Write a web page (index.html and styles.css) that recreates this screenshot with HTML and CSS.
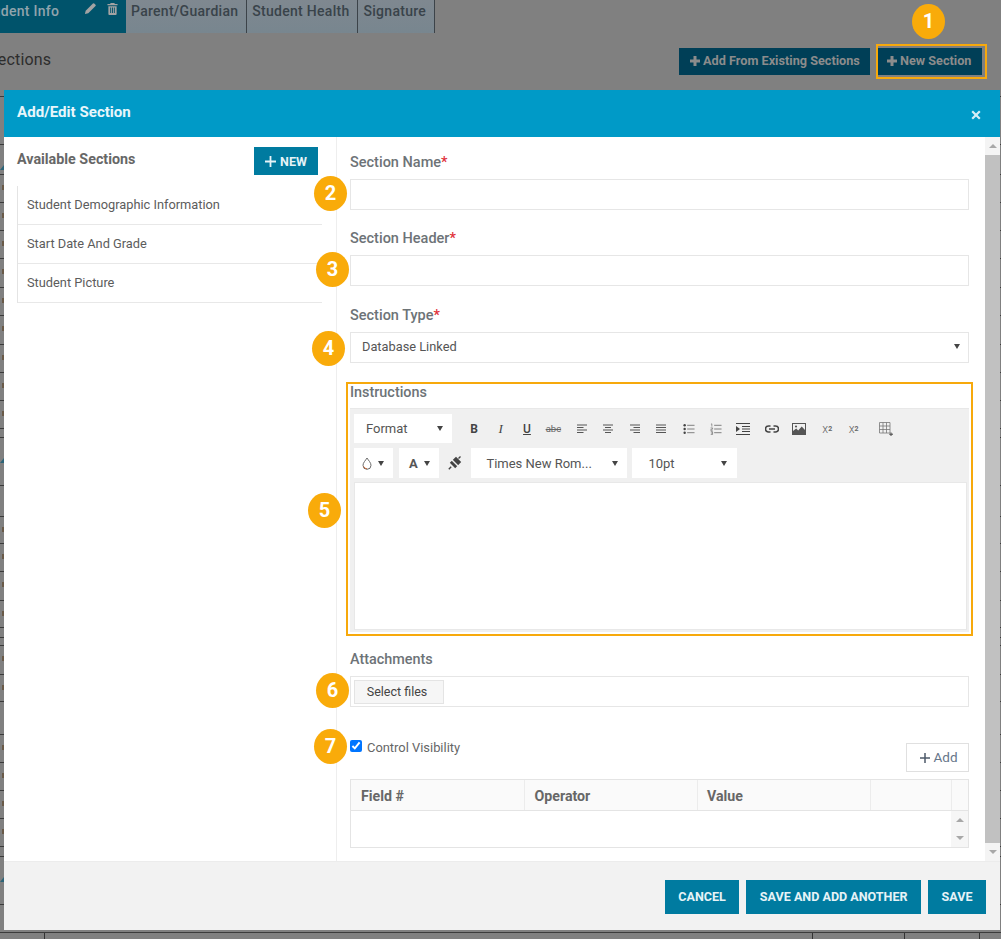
FILE: index.html
```html
<!DOCTYPE html>
<html lang="en">
<head>
<meta charset="utf-8">
<title>Add/Edit Section</title>
<link rel="stylesheet" href="styles.css">
</head>
<body>
<div class="page">
  <nav class="tabs">
    <div class="tab tab-active">
      <span class="tab-active-name">Student Info</span>
      <svg class="tab-icon pencil" viewBox="0 0 14 14"><path d="M1 13l.8-3.6L9.6 1.6a1 1 0 0 1 1.4 0l1.4 1.4a1 1 0 0 1 0 1.4L4.6 12.2z" fill="#a3a3a3"/></svg>
      <svg class="tab-icon trash" viewBox="0 0 12 14"><path d="M4 1h4l.6 1.2H11.500V3.500H.5V2.200H3.400zM1.500 4.500h9V13a1 1 0 0 1-1 1h-7a1 1 0 0 1-1-1zM3.500 6v6h1V6zM5.500 6v6h1V6zM7.500 6v6h1V6z" fill="#a3a3a3" fill-rule="evenodd"/></svg>
    </div>
    <div class="tab">Parent/Guardian</div>
    <div class="tab">Student Health</div>
    <div class="tab">Signature</div>
  </nav>
  <header class="back-head">
    <h1 class="back-title">Sections</h1>
    <div class="back-actions">
      <button class="back-btn back-btn-add"><svg class="back-plus" viewBox="0 0 10 10"><path d="M5 0v10M0 5h10" stroke="#8c8c8c" stroke-width="3"/></svg>Add From Existing Sections</button>
      <div class="new-frame"><button class="back-btn back-btn-new"><svg class="back-plus" viewBox="0 0 10 10"><path d="M5 0v10M0 5h10" stroke="#8c8c8c" stroke-width="3"/></svg>New Section</button></div>
    </div>
  </header>
  <div class="back-table">
    <div class="back-row" style="height:48px"></div>
    <div class="back-row" style="height:30px"><i class="tri"></i></div>
    <div class="back-row" style="height:28px"><i class="mark"></i></div>
    <div class="back-row" style="height:28px"><i class="mark"></i></div>
    <div class="back-row" style="height:28px"><i class="mark"></i></div>
    <div class="back-row" style="height:29px"><i class="mark"></i></div>
    <div class="back-row" style="height:28px"><i class="mark"></i></div>
    <div class="back-row" style="height:29px"><i class="mark"></i></div>
    <div class="back-row" style="height:28px"><i class="mark"></i></div>
    <div class="back-row" style="height:28px"><i class="mark"></i></div>
    <div class="back-row" style="height:28px"><i class="mark"></i></div>
    <div class="back-row" style="height:9px"></div>
    <div class="back-row" style="height:48px"><i class="tri"></i></div>
    <div class="back-row" style="height:31px"></div>
    <div class="back-row" style="height:27px"><i class="mark"></i></div>
    <div class="back-row" style="height:28px"><i class="mark"></i></div>
    <div class="back-row" style="height:29px"><i class="mark"></i></div>
    <div class="back-row" style="height:27px"><i class="mark"></i></div>
    <div class="back-row" style="height:10px"></div>
    <div class="back-row" style="height:8px"></div>
    <div class="back-row" style="height:29px"><i class="mark"></i></div>
    <div class="back-row" style="height:27px"><i class="mark"></i></div>
    <div class="back-row" style="height:33px"></div>
    <div class="back-row" style="height:28px"><i class="mark"></i></div>
    <div class="back-row" style="height:28px"><i class="mark"></i></div>
    <div class="back-row" style="height:28px"><i class="mark"></i></div>
    <div class="back-row" style="height:28px"><i class="mark"></i></div>
    <div class="back-row" style="height:10px"></div>
    <div class="back-row" style="height:48px"><i class="tri"></i></div>
    <div class="back-row" style="height:28px"></div>
    <div class="back-row back-cells">
      <span class="back-cell cell-a"></span><span class="back-cell cell-b"></span><span class="back-cell cell-c"></span><span class="back-cell cell-d"></span>
    </div>
  </div>

  <section class="modal">
    <div class="modal-head">
      <h2 class="modal-title">Add/Edit Section</h2>
      <svg class="modal-close" viewBox="0 0 10 10"><path d="M1.200 1.200l7.600 7.600M8.800 1.200L1.200 8.800" stroke="#d6eef6" stroke-width="2.200"/></svg>
    </div>
    <div class="modal-body">
      <aside class="side">
        <div class="side-head">
          <h3 class="side-title">Available Sections</h3>
          <button class="new-btn"><svg class="new-plus" viewBox="0 0 11 11"><path d="M5.500 0v11M0 5.500h11" stroke="#e6f3f7" stroke-width="1.800"/></svg>NEW</button>
        </div>
        <ul class="side-list">
          <li class="side-item">Student Demographic Information</li>
          <li class="side-item">Start Date And Grade</li>
          <li class="side-item">Student Picture</li>
        </ul>
      </aside>
      <div class="form">
        <label class="label">Section Name<span class="req">*</span></label>
        <div class="field"></div>
        <label class="label label-next">Section Header<span class="req">*</span></label>
        <div class="field"></div>
        <label class="label label-next3">Section Type<span class="req">*</span></label>
        <div class="field select-field"><span>Database Linked</span><i class="caret"></i></div>

        <div class="instructions">
          <div class="instr-label">Instructions</div>
          <div class="editor">
            <div class="tool-row">
              <div class="drop drop-format"><span>Format</span><i class="caret"></i></div>
              <div class="tools">
                <span class="tool tool-b">B</span>
                <span class="tool tool-i">I</span>
                <span class="tool tool-u">U</span>
                <span class="tool tool-s">abc</span>
                <span class="tool gap2"><svg class="ic" viewBox="0 0 12 12"><path d="M1 2h10M1 4.500h6.500M1 7h10M1 9.500h6.500" stroke="#555" stroke-width="1.200"/></svg></span>
                <span class="tool"><svg class="ic" viewBox="0 0 12 12"><path d="M1 2h10M3 4.500h6M1 7h10M3 9.500h6" stroke="#555" stroke-width="1.200"/></svg></span>
                <span class="tool"><svg class="ic" viewBox="0 0 12 12"><path d="M1 2h10M4.500 4.500H11M1 7h10M4.500 9.500H11" stroke="#555" stroke-width="1.200"/></svg></span>
                <span class="tool"><svg class="ic" viewBox="0 0 12 12"><path d="M1 2h10M1 4.500h10M1 7h10M1 9.500h10" stroke="#555" stroke-width="1.200"/></svg></span>
                <span class="tool gap2"><svg class="ic" viewBox="0 0 13 12"><path d="M4.500 2H12.500M4.500 6H12.500M4.500 10H12.500" stroke="#777" stroke-width="1"/><circle cx="1.800" cy="2" r="1.300" fill="#444"/><circle cx="1.800" cy="6" r="1.300" fill="#444"/><circle cx="1.800" cy="10" r="1.300" fill="#444"/></svg></span>
                <span class="tool"><svg class="ic" viewBox="0 0 13 12"><path d="M4.500 2H12.500M4.500 6H12.500M4.500 10H12.500" stroke="#777" stroke-width="1"/><path d="M1 .8l1-.4v3M.6 4.800h2.200v1.400H1V8h2M.8 9h2v3H.8M1 10.500h1.800" stroke="#555" stroke-width=".6" fill="none"/></svg></span>
                <span class="tool gap1"><svg class="ic ic-lg" viewBox="0 0 14 13"><path d="M0 1h14M6 4h8M6 6.500h8M6 9h8M0 12h14" stroke="#444" stroke-width="1.100"/><path d="M0 3.500l4 3-4 3z" fill="#444"/></svg></span>
                <span class="tool gap3"><svg class="ic ic-lg" viewBox="0 0 14 8"><path d="M5.500 1H3.500a3 3 0 0 0 0 6h2M8.500 1h2a3 3 0 0 1 0 6h-2M4 4h6" stroke="#444" stroke-width="1.500" fill="none"/></svg></span>
                <span class="tool"><svg class="ic ic-lg" viewBox="0 0 14 12"><path fill="#555" fill-rule="evenodd" d="M0 0h14v12H0zM1 1v7l3.200-2.600 2 2 3.500-3.800L13 7V1z"/><circle cx="4" cy="3.500" r="1.100" fill="#555"/></svg></span>
                <span class="tool gap2 tool-script">x<sub class="script-mark">2</sub></span>
                <span class="tool tool-script">x<sup class="script-mark">2</sup></span>
                <span class="tool gap6"><svg class="ic ic-lg" viewBox="0 0 14 14"><path d="M.5.500h10.500v10.500H.500zM.5 4h10.500M.5 7.500h10.500M4 .5v10.500M7.500 .5v10.500" stroke="#777" stroke-width=".8" fill="none"/><path d="M12 10.500v3.500M10.200 12.200h3.800" stroke="#444" stroke-width="1"/></svg></span>
              </div>
            </div>
            <div class="tool-row tool-row2">
              <div class="drop drop-color"><svg class="drop-ic" viewBox="0 0 10 13"><path d="M5 1C3.500 3.500 1 5.700 1 8.300a4 4 0 0 0 8 0C9 5.700 6.500 3.500 5 1z" fill="none" stroke="#6a6a6a" stroke-width="1"/><path d="M1.700 9.500a3.600 3.600 0 0 0 3.300 2.300" fill="none" stroke="#c96a3a" stroke-width="1"/></svg><i class="caret"></i></div>
              <div class="drop drop-a"><b>A</b><i class="caret"></i></div>
              <span class="tool tool-clear"><svg class="ic ic-lg" viewBox="0 0 14 14"><path d="M8 .8l5.200 5.200-6 6.200L1.800 6.800z" fill="#444"/><path d="M1.500 1.500l11 11" stroke="#f0f0f0" stroke-width="1.400"/><path d="M3.200 10.800L.8 13.200M10.500 2.500l2-2" stroke="#444" stroke-width="1.400"/></svg></span>
              <div class="drop drop-font"><span>Times New Rom...</span><i class="caret"></i></div>
              <div class="drop drop-size"><span>10pt</span><i class="caret"></i></div>
            </div>
            <div class="edit-area"></div>
          </div>
        </div>

        <label class="label label-attach">Attachments</label>
        <div class="field upload"><button class="select-files">Select files</button></div>

        <div class="visibility">
          <label class="check-label"><input class="check" type="checkbox" checked><span class="check-text">Control Visibility</span></label>
          <button class="add-btn"><svg class="add-plus" viewBox="0 0 10 10"><path d="M5 0v10M0 5h10" stroke="#4d5a6a" stroke-width="1.500"/></svg>Add</button>
        </div>

        <div class="grid">
          <div class="grid-head">
            <span class="gh gh-w">Field #</span>
            <span class="gh gh-w">Operator</span>
            <span class="gh gh-w2">Value</span>
            <span class="gh gh-e"></span>
            <span class="gh-s"></span>
          </div>
          <div class="grid-body">
            <div class="grid-scroll"><i class="arr-up"></i><i class="arr-down"></i></div>
          </div>
        </div>
      </div>
      <div class="scroll">
        <i class="arr-up"></i>
        <div class="scroll-thumb"></div>
        <i class="arr-down"></i>
      </div>
    </div>
    <div class="modal-foot">
      <button class="foot-btn">CANCEL</button>
      <button class="foot-btn">SAVE AND ADD ANOTHER</button>
      <button class="foot-btn">SAVE</button>
    </div>
  </section>

  <span class="badge b1">1</span>
  <span class="badge b2">2</span>
  <span class="badge b3">3</span>
  <span class="badge b4">4</span>
  <span class="badge b5">5</span>
  <span class="badge b6">6</span>
  <span class="badge b7">7</span>
</div>
</body>
</html>
```

FILE: styles.css
```css
* { box-sizing: border-box; }
html, body { margin: 0; padding: 0; }
body { font-family: Roboto, "Liberation Sans", sans-serif; background: #808080; }
button { font-family: inherit; border: 0; padding: 0; cursor: pointer; }
h1, h2, h3, ul { margin: 0; padding: 0; }
.page { position: relative; width: 1001px; height: 939px; overflow: hidden; background: #808080; }

/* backdrop */
.tabs { display: flex; height: 33px; }
.tab { padding: 2px 8px 0 5px; background: linear-gradient(#7f8890, #78868f); border-right: 1px solid #3c4349; font-size: 14px; font-weight: 500; letter-spacing: .28px; line-height: 18px; color: #39434a; }
.tab-active { position: relative; width: 126px; padding: 2px 0 0; background: #00536b; border-right: 0; color: #90a4ad; overflow: hidden; }
.tab-active-name { display: block; margin-left: -21px; white-space: nowrap; }
.tab-icon { position: absolute; top: 2px; }
.pencil { left: 84px; width: 13px; height: 13px; }
.trash { left: 107px; width: 11px; height: 13px; }
.back-head { display: flex; justify-content: space-between; height: 63px; }
.back-title { margin: 17px 0 0 -12px; font-size: 16px; font-weight: 400; letter-spacing: .2px; line-height: 20px; color: #2d2d2d; }
.back-actions { display: flex; gap: 6px; padding: 11px 14px 0 0; }
.back-btn { display: flex; align-items: center; height: 27px; padding: 0 0 2px; background: #003f57; color: #8c8c8c; font-size: 12.700px; font-weight: 700; }
.back-btn-add { width: 191px; margin-top: 4px; padding-left: 11px; }
.new-frame { display: flex; width: 111px; height: 35px; padding: 2px 3px 2px 0; border: 2px solid #f7a90c; }
.back-btn-new { width: 104px; padding-left: 9px; }
.back-plus { flex: none; width: 10px; height: 10px; margin-right: 3px; }
.back-row { position: relative; border-top: 1px solid #3b3b3b; }
.mark { position: absolute; left: 2px; top: 10px; width: 2px; height: 5px; background: #6a5a48; }
.tri { position: absolute; left: 0; top: 20px; width: 0; height: 0; border-left: 4px solid transparent; border-bottom: 5px solid #2c6478; }
.back-cells { display: flex; height: 7px; }
.back-cell { height: 7px; border-right: 1px solid #333; }
.cell-a { width: 45px; }
.cell-b { width: 768px; }
.cell-c { width: 92px; }
.cell-d { width: 75px; }

/* modal */
.modal { position: absolute; left: 4px; top: 90px; width: 996px; height: 840px; display: flex; flex-direction: column; background: #fff; }
.modal-head { flex: none; height: 47px; display: flex; align-items: center; justify-content: space-between; padding: 0 19px 0 13px; background: #009ac7; }
.modal-title { margin-bottom: 4px; font-size: 15.100px; font-weight: 700; color: #e8f6fb; }
.modal-close { width: 10px; height: 10px; margin-top: 2px; }
.modal-body { flex: none; height: 724px; display: flex; }

.side { flex: none; width: 333px; padding: 10px 14px 0 13px; border-right: 1px solid #eee; }
.side-head { display: flex; justify-content: space-between; padding-right: 4px; height: 39px; }
.side-title { font-size: 14.300px; font-weight: 700; line-height: 24px; color: #676767; }
.new-btn { display: flex; align-items: center; justify-content: center; width: 64px; height: 28px; background: #007ba0; color: #e6f3f7; font-size: 12.500px; font-weight: 700; }
.new-plus { flex: none; width: 11px; height: 11px; margin-right: 4px; }
.side-list { list-style: none; border-left: 1px solid #e4e4e4; }
.side-item { height: 39px; padding-left: 9px; border-bottom: 1px solid #e8e8e8; font-size: 12.800px; line-height: 37px; color: #5c5c5c; }

.form { flex: none; width: 648px; padding: 15px 16px 0 13px; }
.label { display: block; height: 20px; margin-bottom: 7px; font-size: 14.500px; font-weight: 500; line-height: 22px; color: #6d7377; }
.label-next { margin-top: 18px; }
.label-next3 { margin-top: 19px; }
.req { color: #e0313a; }
.field { height: 31px; border: 1px solid #e6e6e6; }
.select-field { display: flex; align-items: center; justify-content: space-between; padding: 0 8px 2px 11px; font-size: 12.800px; color: #555; }
.caret { flex: none; width: 0; height: 0; border-left: 3.500px solid transparent; border-right: 3.500px solid transparent; border-top: 5px solid #444; }

.instructions { width: 627px; height: 254px; margin: 19px 0 0 -4px; padding: 0 2px; border: 2px solid #f7a90c; }
.instr-label { height: 16px; margin-bottom: 8px; font-size: 14.400px; font-weight: 500; line-height: 17px; color: #6d7377; }
.editor { height: 224px; padding: 5px 2px 0 4px; background: #f0f0f0; border-top: 1px solid #e8e8e8; }
.tool-row { display: flex; height: 29px; }
.tool-row2 { height: 30px; margin-top: 5px; }
.drop { display: flex; align-items: center; justify-content: space-between; background: #fff; font-size: 13px; color: #555; }
.drop-format { width: 98px; padding: 0 9px 0 12px; }
.drop-color { width: 39px; padding: 0 9px 0 8px; }
.drop-a { width: 40px; margin-left: 6px; padding: 0 9px 0 10px; font-size: 13px; }
.drop-font { width: 156px; padding: 0 9px 0 15px; }
.drop-size { width: 105px; margin-left: 5px; padding: 0 10px 0 16px; }
.drop-ic { width: 10px; height: 13px; }
.tools { display: flex; align-items: center; margin-left: 9px; }
.tool { flex: none; display: flex; align-items: center; justify-content: center; width: 26.400px; height: 29px; font-size: 12px; color: #444; }
.gap1 { margin-left: 1px; }
.gap2 { margin-left: 2px; }
.gap3 { margin-left: 3px; }
.gap6 { margin-left: 6px; }
.tool-b { font-weight: 700; }
.tool-i { font-family: "Liberation Serif", serif; font-style: italic; font-size: 13px; }
.tool-u { text-decoration: underline; font-weight: 500; }
.tool-s { font-size: 9.500px; text-decoration: line-through; color: #666; }
.tool-script { font-size: 12px; font-weight: 300; color: #666; }
.script-mark { font-size: 7px; line-height: 0; font-weight: 700; }
sub.script-mark { vertical-align: -4px; }
sup.script-mark { vertical-align: 5px; }
.ic { width: 12px; height: 12px; }
.ic-lg { width: 14px; height: 14px; }
.tool-clear { margin: 0 3px; }
.edit-area { width: 613px; height: 148px; margin-top: 4px; background: #fff; border: 1px solid #e8e8e8; }

.label-attach { margin-top: 13px; font-size: 14.400px; }
.upload { padding: 3px; }
.select-files { display: block; width: 90px; height: 24px; padding: 0 4px 2px 0; background: #f6f6f6; border: 1px solid #e4e4e4; font-size: 12.500px; color: #444; }

.visibility { display: flex; justify-content: space-between; align-items: flex-start; margin-top: 33px; height: 32px; }
.check-label { display: flex; align-items: flex-start; font-size: 12.900px; line-height: 14px; color: #666; }
.check { width: 12px; height: 12px; margin: 0 5px 0 0; accent-color: #0075ff; }
.check-text { margin-top: 1px; }
.add-btn { display: flex; align-items: center; justify-content: center; width: 63px; height: 29px; margin-top: 3px; padding: 0 0 2px 3px; background: #fff; border: 1px solid #e0e0e0; font-size: 13.500px; color: #66768a; }
.add-plus { flex: none; width: 10px; height: 10px; margin: 2px 3px 0 0; }

.grid { height: 69px; margin-top: 7px; border: 1px solid #e4e4e4; }
.grid-head { display: flex; height: 31px; background: #fafafa; border-bottom: 1px solid #e4e4e4; }
.gh { height: 30px; padding-left: 10px; border-right: 1px solid #ececec; font-size: 14.200px; font-weight: 700; line-height: 33px; color: #676767; }
.gh-w { width: 173.500px; }
.gh-w2 { width: 173px; padding-left: 9px; }
.gh-e { width: 81px; }
.gh-s { flex: 1; }
.grid-body { display: flex; justify-content: flex-end; height: 36px; }
.grid-scroll { width: 17px; display: flex; flex-direction: column; align-items: center; justify-content: space-between; padding: 7px 0; background: #f6f6f6; }
.arr-up, .arr-down { display: block; width: 0; height: 0; border-left: 4px solid transparent; border-right: 4px solid transparent; }
.arr-up { border-bottom: 4px solid #a8a8a8; }
.arr-down { border-top: 4px solid #a8a8a8; }

.scroll { flex: none; width: 15px; display: flex; flex-direction: column; align-items: center; background: #f4f4f4; }
.scroll .arr-up { margin: 7px 0 7px; }
.scroll .arr-down { margin-top: 7px; }
.scroll-thumb { width: 100%; height: 688px; background: #c1c1c1; }

.modal-foot { flex: none; height: 69px; display: flex; justify-content: flex-end; gap: 7px; padding: 18px 14px 0 0; background: #f2f2f2; border-top: 1px solid #ececec; }
.foot-btn { height: 34px; padding: 0 13.500px 2px; background: #007ba0; color: #e6f3f7; font-size: 12.550px; font-weight: 700; }

/* callouts */
.badge { position: absolute; width: 33px; height: 35px; border-radius: 50%; background: #f9ab0a; color: #fff; font-size: 20px; font-weight: 700; line-height: 35px; text-align: center; }
.b1 { left: 912px; top: 4px; }
.b2 { left: 314px; top: 176px; }
.b3 { left: 316px; top: 252px; }
.b4 { left: 312px; top: 331px; }
.b5 { left: 308px; top: 493px; }
.b6 { left: 316px; top: 673px; }
.b7 { left: 314px; top: 729px; }
```
